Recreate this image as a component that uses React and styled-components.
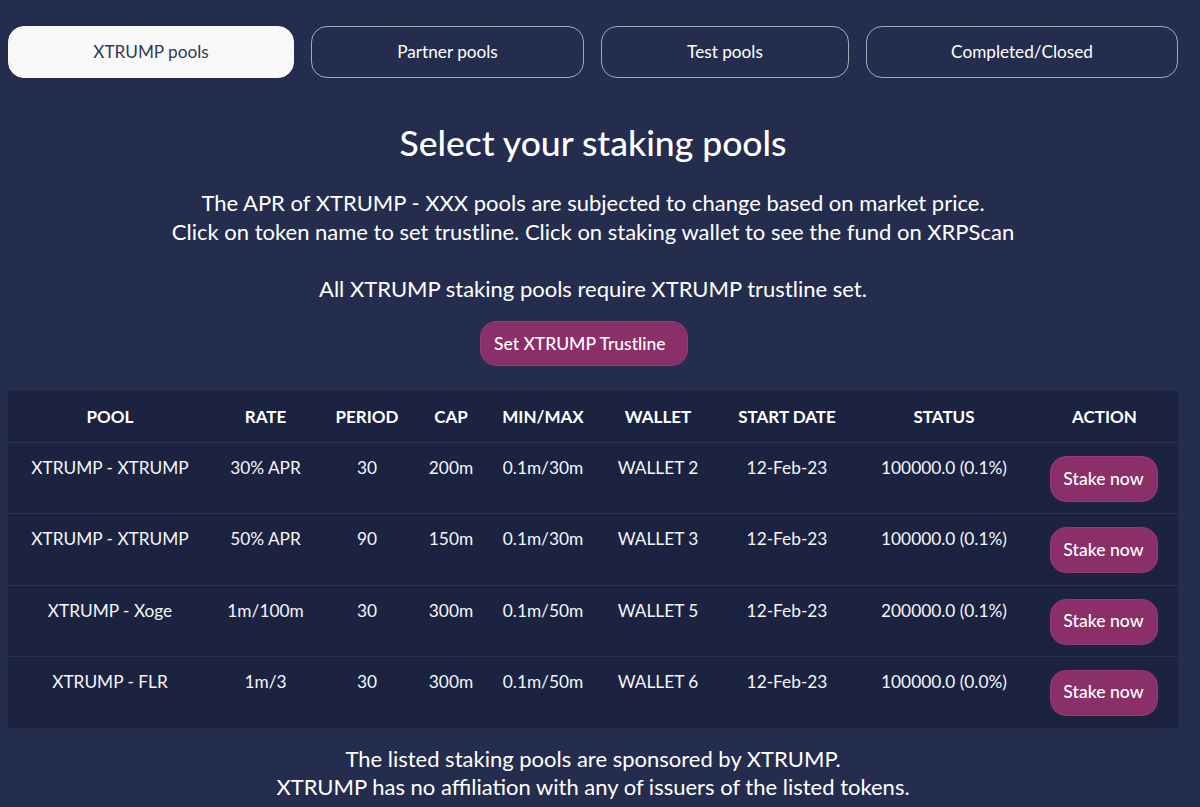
import styled, { createGlobalStyle } from "styled-components";

const tabs = [
  { label: "XTRUMP pools", width: 286, active: true },
  { label: "Partner pools", width: 273 },
  { label: "Test pools", width: 248 },
  { label: "Completed/Closed", width: 312 },
];

const columns = [
  { title: "POOL", width: 204 },
  { title: "RATE", width: 107 },
  { title: "PERIOD", width: 96 },
  { title: "CAP", width: 72 },
  { title: "MIN/MAX", width: 112 },
  { title: "WALLET", width: 118 },
  { title: "START DATE", width: 140 },
  { title: "STATUS", width: 174 },
  { title: "ACTION", width: 147 },
];

const pools = [
  ["XTRUMP - XTRUMP", "30% APR", "30", "200m", "0.1m/30m", "WALLET 2", "12-Feb-23", "100000.0 (0.1%)"],
  ["XTRUMP - XTRUMP", "50% APR", "90", "150m", "0.1m/30m", "WALLET 3", "12-Feb-23", "100000.0 (0.1%)"],
  ["XTRUMP - Xoge", "1m/100m", "30", "300m", "0.1m/50m", "WALLET 5", "12-Feb-23", "200000.0 (0.1%)"],
  ["XTRUMP - FLR", "1m/3", "30", "300m", "0.1m/50m", "WALLET 6", "12-Feb-23", "100000.0 (0.0%)"],
];

const App = () => {
  return (
    <Page>
      <GlobalStyle />
      <Tabs>
        {tabs.map((tab) => (
          <Tab key={tab.label} $active={tab.active} $width={tab.width}>
            {tab.label}
          </Tab>
        ))}
      </Tabs>
      <Title>Select your staking pools</Title>
      <Intro>
        The APR of XTRUMP - XXX pools are subjected to change based on market price.
        <br />
        Click on token name to set trustline. Click on staking wallet to see the fund on XRPScan
      </Intro>
      <Requirement>All XTRUMP staking pools require XTRUMP trustline set.</Requirement>
      <TrustlineButton>Set XTRUMP Trustline</TrustlineButton>
      <PoolTable>
        <colgroup>
          {columns.map((col) => (
            <col key={col.title} width={col.width} />
          ))}
        </colgroup>
        <thead>
          <tr>
            {columns.map((col) => (
              <HeadCell key={col.title}>{col.title}</HeadCell>
            ))}
          </tr>
        </thead>
        <tbody>
          {pools.map((row, i) => (
            <tr key={i}>
              {row.map((value, j) => (
                <Cell key={j}>{value}</Cell>
              ))}
              <Cell>
                <StakeButton>Stake now</StakeButton>
              </Cell>
            </tr>
          ))}
        </tbody>
      </PoolTable>
      <Footer>
        The listed staking pools are sponsored by XTRUMP.
        <br />
        XTRUMP has no affiliation with any of issuers of the listed tokens.
      </Footer>
    </Page>
  );
};

const GlobalStyle = createGlobalStyle`
  html, body {
    margin: 0;
    padding: 0;
    height: 807px;
    overflow: hidden;
    background-color: #252d4e;
  }
`;

const Page = styled.div`
  width: 1170px;
  margin-left: 8px;
  padding-top: 26px;
  display: flex;
  flex-direction: column;
  align-items: center;
  font-family: "Lato", "Noto Sans", sans-serif;
  color: #ffffff;
`;

const Tabs = styled.div`
  display: flex;
  gap: 17px;
  width: 100%;
`;

const Tab = styled.button`
  width: ${({ $width }) => $width}px;
  height: 52px;
  border-radius: 16px;
  border: 1px solid ${({ $active }) => ($active ? "#f8f8f8" : "#a3a8b8")};
  background-color: ${({ $active }) => ($active ? "#f8f8f8" : "transparent")};
  color: ${({ $active }) => ($active ? "#303a58" : "#ffffff")};
  font-family: inherit;
  font-size: 17.2px;
  padding: 0 0 2px;
`;

const Title = styled.h1`
  margin: 43px 0 0;
  font-size: 35.5px;
  line-height: 44px;
  font-weight: 500;
`;

const Intro = styled.p`
  margin: 23px 0 0;
  font-size: 22px;
  line-height: 29px;
  text-align: center;
`;

const Requirement = styled.p`
  margin: 28px 0 0;
  font-size: 22px;
  line-height: 29px;
  text-align: center;
`;

const TrustlineButton = styled.button`
  margin: 18px 18px 0 0;
  width: 208px;
  height: 45px;
  border-radius: 16px;
  border: 1px solid #963a73;
  background-color: #8b2f68;
  color: #ffffff;
  font-family: inherit;
  font-size: 17.5px;
  font-weight: 500;
  text-align: left;
  padding: 0 0 0 13px;
`;

const PoolTable = styled.table`
  margin-top: 25px;
  width: 1170px;
  table-layout: fixed;
  border-collapse: collapse;
  background-color: #1b2340;
`;

const HeadCell = styled.th`
  height: 51px;
  padding: 0;
  font-size: 17px;
  font-weight: 700;
  text-align: center;
  border-bottom: 1px solid #2a3350;
`;

const Cell = styled.td`
  height: 71.3px;
  padding: 13px 0 0;
  vertical-align: top;
  font-size: 17.3px;
  line-height: 24px;
  text-align: center;
  color: #f5f6fa;
  border-bottom: 1px solid #2a3350;
  box-sizing: border-box;
  tr:last-child & {
    border-bottom: none;
  }
`;

const StakeButton = styled.button`
  width: 108px;
  height: 46px;
  margin-right: 2px;
  border-radius: 16px;
  border: 1px solid #963a73;
  background-color: #8b2f68;
  color: #ffffff;
  font-family: inherit;
  font-size: 17.6px;
  font-weight: 500;
  padding: 0 0 2px;
`;

const Footer = styled.p`
  margin: 17px 0 0;
  font-size: 22px;
  line-height: 28px;
  text-align: center;
`;

export default App;
